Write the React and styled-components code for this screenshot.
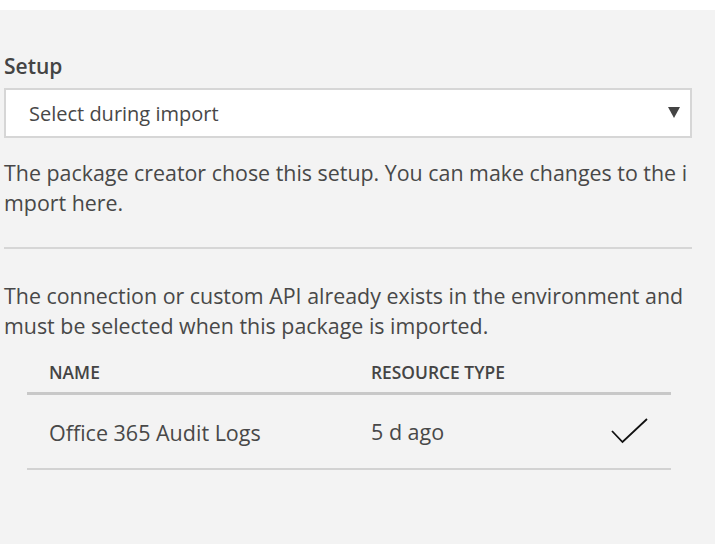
import React from "react";
import styled, { createGlobalStyle } from "styled-components";

const GlobalStyle = createGlobalStyle`
  html, body {
    margin: 0;
    padding: 0;
    background: #ffffff;
  }
  body {
    font-family: "Open Sans", "Noto Sans", sans-serif;
    color: #484848;
  }
`;

const Page = styled.div`
  margin-top: 10px;
  min-height: calc(100vh - 10px);
  background: #f3f3f3;
  padding: 42px 23px 0 4px;
  box-sizing: border-box;
`;

const Label = styled.div`
  font-size: 21px;
  font-weight: 600;
  line-height: 28px;
  color: #444444;
`;

const SelectBox = styled.div`
  margin-top: 8px;
  height: 50px;
  box-sizing: border-box;
  border: 2px solid #d6d6d6;
  background: #ffffff;
  display: flex;
  align-items: center;
  justify-content: space-between;
  padding: 0 10px 0 23px;
  font-size: 20px;
  color: #484848;
`;

const Arrow = styled.svg`
  width: 12px;
  height: 11px;
  margin-top: -2px;
`;

const Paragraph = styled.p`
  margin: ${(p) => p.$top}px 0 0;
  font-size: 21.4px;
  line-height: 30px;
  color: #484848;
  word-break: break-all;
`;

const Divider = styled.hr`
  margin: 29px 0 0;
  border: 0;
  height: 2px;
  background: #d6d6d6;
`;

const Table = styled.div`
  margin: 11px 0 0 23px;
  width: 644px;
`;

const Row = styled.div`
  display: grid;
  grid-template-columns: 322px 1fr 60px;
  align-items: center;
  height: ${(p) => p.$height}px;
  border-bottom: ${(p) => p.$line};
  box-sizing: border-box;
  padding-left: 22px;
`;

const HeadCell = styled.div`
  font-size: 17.4px;
  font-weight: 600;
  color: #444444;
`;

const Cell = styled.div`
  font-size: 21.5px;
  color: #484848;
  margin-top: ${(p) => p.$shift || 0}px;
`;

const Check = styled.svg`
  width: 38px;
  height: 28px;
`;

export default function App() {
  return (
    <>
      <GlobalStyle />
      <Page>
        <Label>Setup</Label>
        <SelectBox>
          <span>Select during import</span>
          <Arrow viewBox="0 0 12 11">
            <polygon points="0,0 12,0 6,11" fill="#444444" />
          </Arrow>
        </SelectBox>
        <Paragraph $top={20}>
          The package creator chose this setup. You can make changes to the import here.
        </Paragraph>
        <Divider />
        <Paragraph $top={32}>
          The connection or custom API already exists in the environment and must be selected when this package is imported.
        </Paragraph>
        <Table>
          <Row $height={43} $line="3px solid #c8c8c8">
            <HeadCell>NAME</HeadCell>
            <HeadCell>RESOURCE TYPE</HeadCell>
            <span />
          </Row>
          <Row $height={75} $line="2px solid #d2d2d2">
            <Cell $shift={1}>Office 365 Audit Logs</Cell>
            <Cell $shift={-1}>5 d ago</Cell>
            <Check viewBox="0 0 38 28">
              <polyline
                points="1,13 11.5,24 36,1"
                fill="none"
                stroke="#111111"
                strokeWidth="1.8"
              />
            </Check>
          </Row>
        </Table>
      </Page>
    </>
  );
}
